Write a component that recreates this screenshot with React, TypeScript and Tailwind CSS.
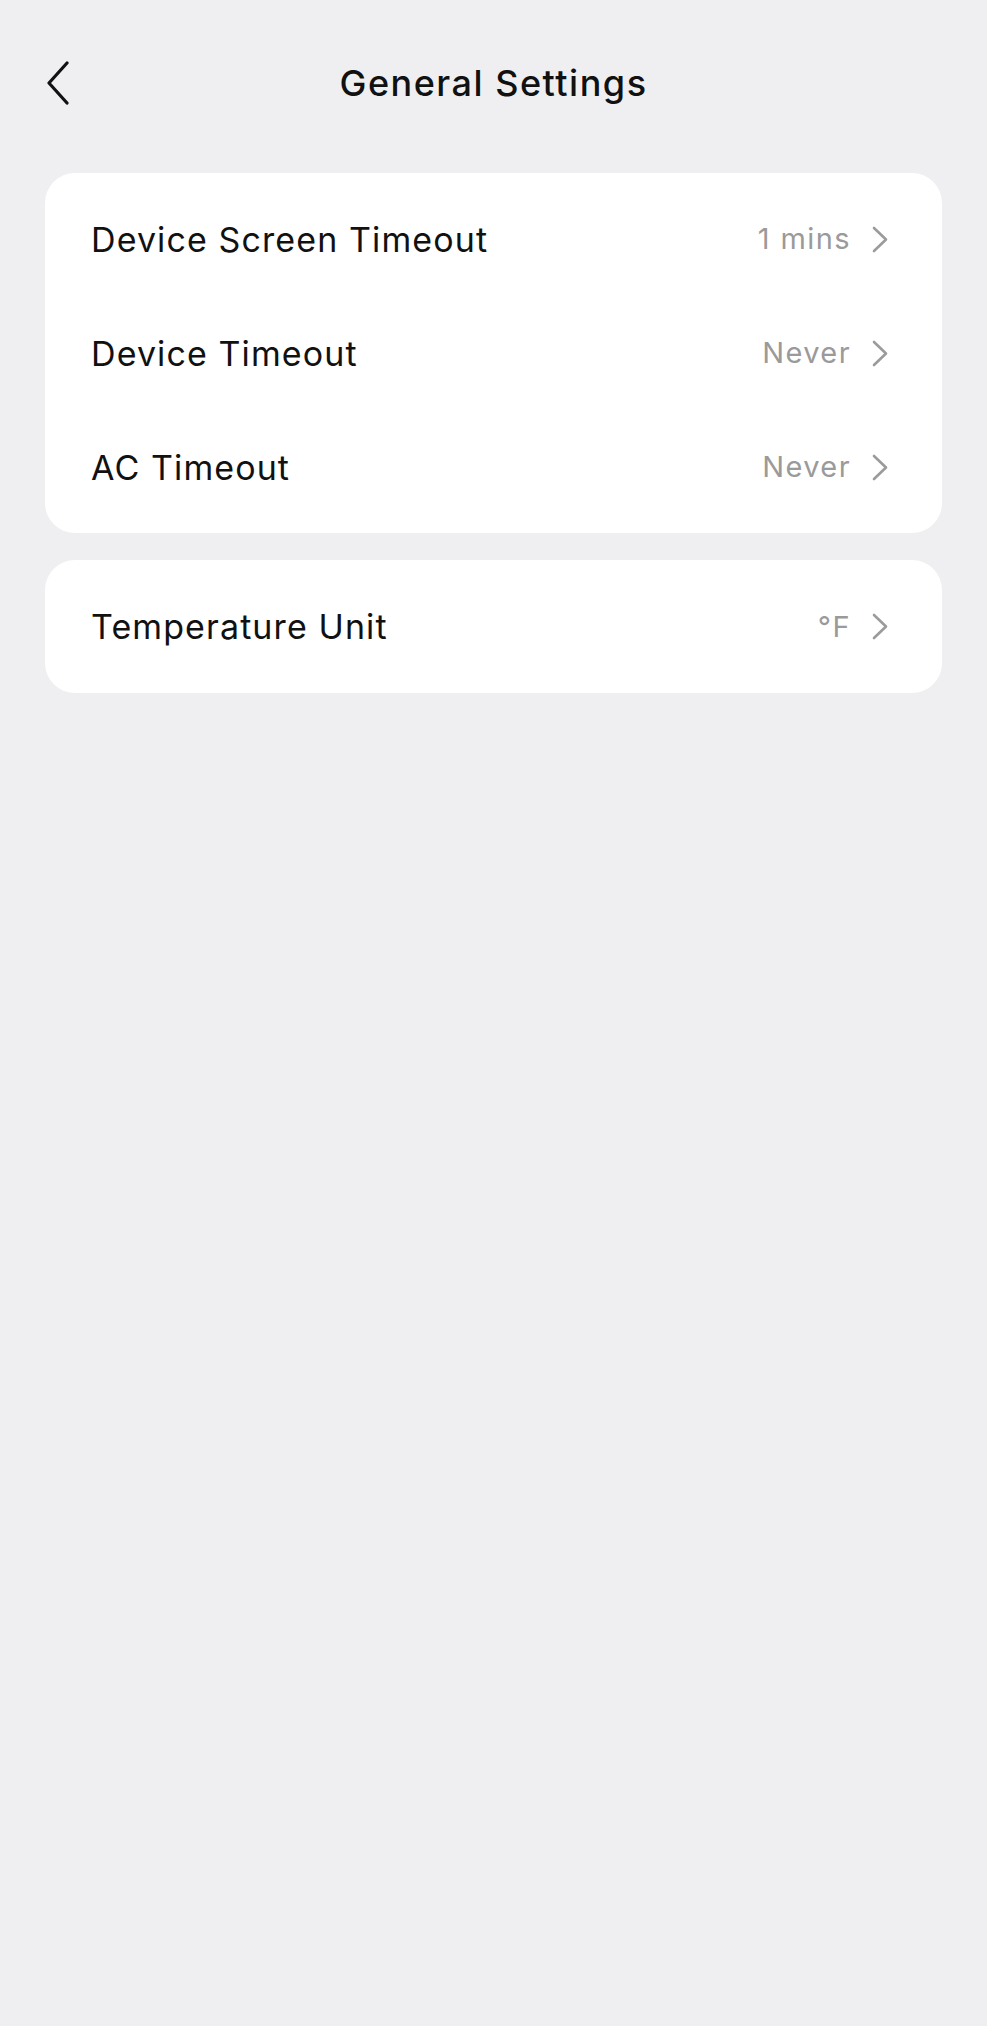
import React from "react";

function Chevron() {
  return (
    <svg width="16" height="27" viewBox="0 0 16 27" fill="none" className="shrink-0">
      <path d="M2 2 L14 13.5 L2 25" stroke="#9b9b9b" strokeWidth="2.6" strokeLinecap="round" strokeLinejoin="round" />
    </svg>
  );
}

function Row({ label, value }: { label: string; value: string }) {
  return (
    <div className="flex h-[114px] items-center justify-between">
      <span className="text-[34px] text-[#111111] tracking-[1.1px]">{label}</span>
      <div className="flex items-center gap-[21px]">
        <span className="text-[29px] text-[#9a9a9a] tracking-[1.4px]">{value}</span>
        <Chevron />
      </div>
    </div>
  );
}

export default function App() {
  return (
    <div
      className="min-h-[2026px] w-full bg-[#efeff1] px-[45px] pt-[57px]"
      style={{ fontFamily: "Inter, 'Noto Sans', sans-serif" }}
    >
      <div className="relative flex h-[52px] items-center justify-center">
        <svg
          width="24"
          height="44"
          viewBox="0 0 24 44"
          fill="none"
          className="absolute left-[1px] top-[4px]"
        >
          <path d="M21 2 L3 22 L21 42" stroke="#111111" strokeWidth="3.2" strokeLinecap="round" strokeLinejoin="round" />
        </svg>
        <span className="text-[36px] font-medium text-[#111111] tracking-[1.5px]">General Settings</span>
      </div>

      <div className="mt-[64px] rounded-[30px] bg-white py-[9px] pl-[46px] pr-[54px]">
        <Row label="Device Screen Timeout" value="1 mins" />
        <Row label="Device Timeout" value="Never" />
        <Row label="AC Timeout" value="Never" />
      </div>

      <div className="mt-[27px] rounded-[30px] bg-white pl-[46px] pr-[54px]">
        <div className="flex h-[133px] items-center justify-between">
          <span className="text-[34px] text-[#111111] tracking-[1.1px]">Temperature Unit</span>
          <div className="flex items-center gap-[21px]">
            <span className="text-[29px] text-[#9a9a9a] tracking-[1.4px]">°F</span>
            <Chevron />
          </div>
        </div>
      </div>
    </div>
  );
}
